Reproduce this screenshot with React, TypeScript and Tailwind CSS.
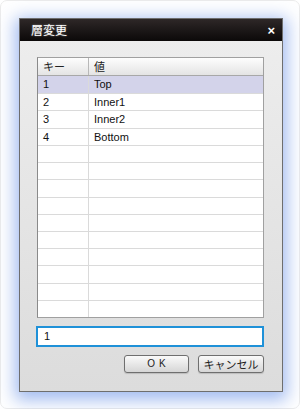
import React from 'react'

const rows = [
  { key: '1', value: 'Top' },
  { key: '2', value: 'Inner1' },
  { key: '3', value: 'Inner2' },
  { key: '4', value: 'Bottom' },
]

const TOTAL_ROWS = 14

export default function App() {
  const filled = [...rows, ...Array.from({ length: TOTAL_ROWS - rows.length }, () => null)]

  return (
    <div className="w-[300px] h-[409px] bg-white">
      <div
        className="w-[300px] h-[409px] rounded-[7px] border border-[#ececec] bg-white pt-[17px] pl-[18px]"
        style={{ fontFamily: '"Liberation Sans", "Noto Sans CJK JP", sans-serif' }}
      >
        {/* dialog window */}
        <div className="w-[264px] h-[374px] flex flex-col border border-[#6e6e6e] bg-gradient-to-b from-[#eeeeee] to-[#dcdcdc] shadow-[0_4px_16px_4px_rgba(70,120,225,0.5)]">
          {/* title bar */}
          <div className="h-[22px] shrink-0 flex items-center justify-between pl-[11px] pr-[7px] bg-gradient-to-b from-[#2e2828] to-[#0c0909]">
            <span className="text-[12px] text-white leading-none [text-shadow:0_0_2px_rgba(255,255,255,0.5)]" style={{ fontFamily: '"Noto Sans CJK JP", sans-serif' }}>
              層変更
            </span>
            <span className="text-[13px] font-bold text-white leading-none">×</span>
          </div>

          <div className="flex flex-col pt-[16px] pl-[17px] pr-[18px]">
            {/* list */}
            <div className="h-[261px] flex flex-col border border-[#a0a0a0] border-l-[#8a8a8a] bg-white">
              <div className="h-[18px] shrink-0 flex bg-gradient-to-b from-[#fdfdfd] to-[#e4e4e4] border-b border-[#a8a8a8] text-[11px] text-[#222]" style={{ fontFamily: '"Noto Sans CJK JP", sans-serif' }}>
                <div className="w-[51px] border-r border-[#b8b8b8] flex items-center pl-[5px]">キー</div>
                <div className="flex-1 flex items-center pl-[5px]">値</div>
              </div>
              {filled.map((row, i) => (
                <div
                  key={i}
                  className={`flex-1 flex border-b border-[#dadada] last:border-b-0 text-[11px] text-[#111] ${i === 0 ? 'bg-[#d3d3ea]' : 'bg-white'}`}
                >
                  <div className="w-[51px] border-r border-[#dadada] flex items-center pl-[5px]">{row?.key}</div>
                  <div className="flex-1 flex items-center pl-[5px]">{row?.value}</div>
                </div>
              ))}
            </div>

            {/* input */}
            <div className="mt-[8px] -ml-[1px] h-[21px] border-2 border-[#1f91d8] bg-white flex items-center pl-[6px] text-[11px] text-[#111]">
              1
            </div>

            {/* buttons */}
            <div className="mt-[8px] flex justify-end gap-[9px]">
              <button className="w-[65px] h-[18px] rounded-[3px] border border-[#6f6f6f] bg-gradient-to-b from-[#fafafa] to-[#d6d6d6] shadow-[0_1px_1px_rgba(0,0,0,0.15)] text-[10px] text-[#222] tracking-[4px] leading-none flex items-center justify-center pl-[4px]">
                OK
              </button>
              <button className="w-[66px] h-[18px] rounded-[3px] border border-[#6f6f6f] bg-gradient-to-b from-[#fafafa] to-[#d6d6d6] shadow-[0_1px_1px_rgba(0,0,0,0.15)] text-[11px] text-[#222] leading-none flex items-center justify-center" style={{ fontFamily: '"Noto Sans CJK JP", sans-serif' }}>
                キャンセル
              </button>
            </div>
          </div>
        </div>
      </div>
    </div>
  )
}
